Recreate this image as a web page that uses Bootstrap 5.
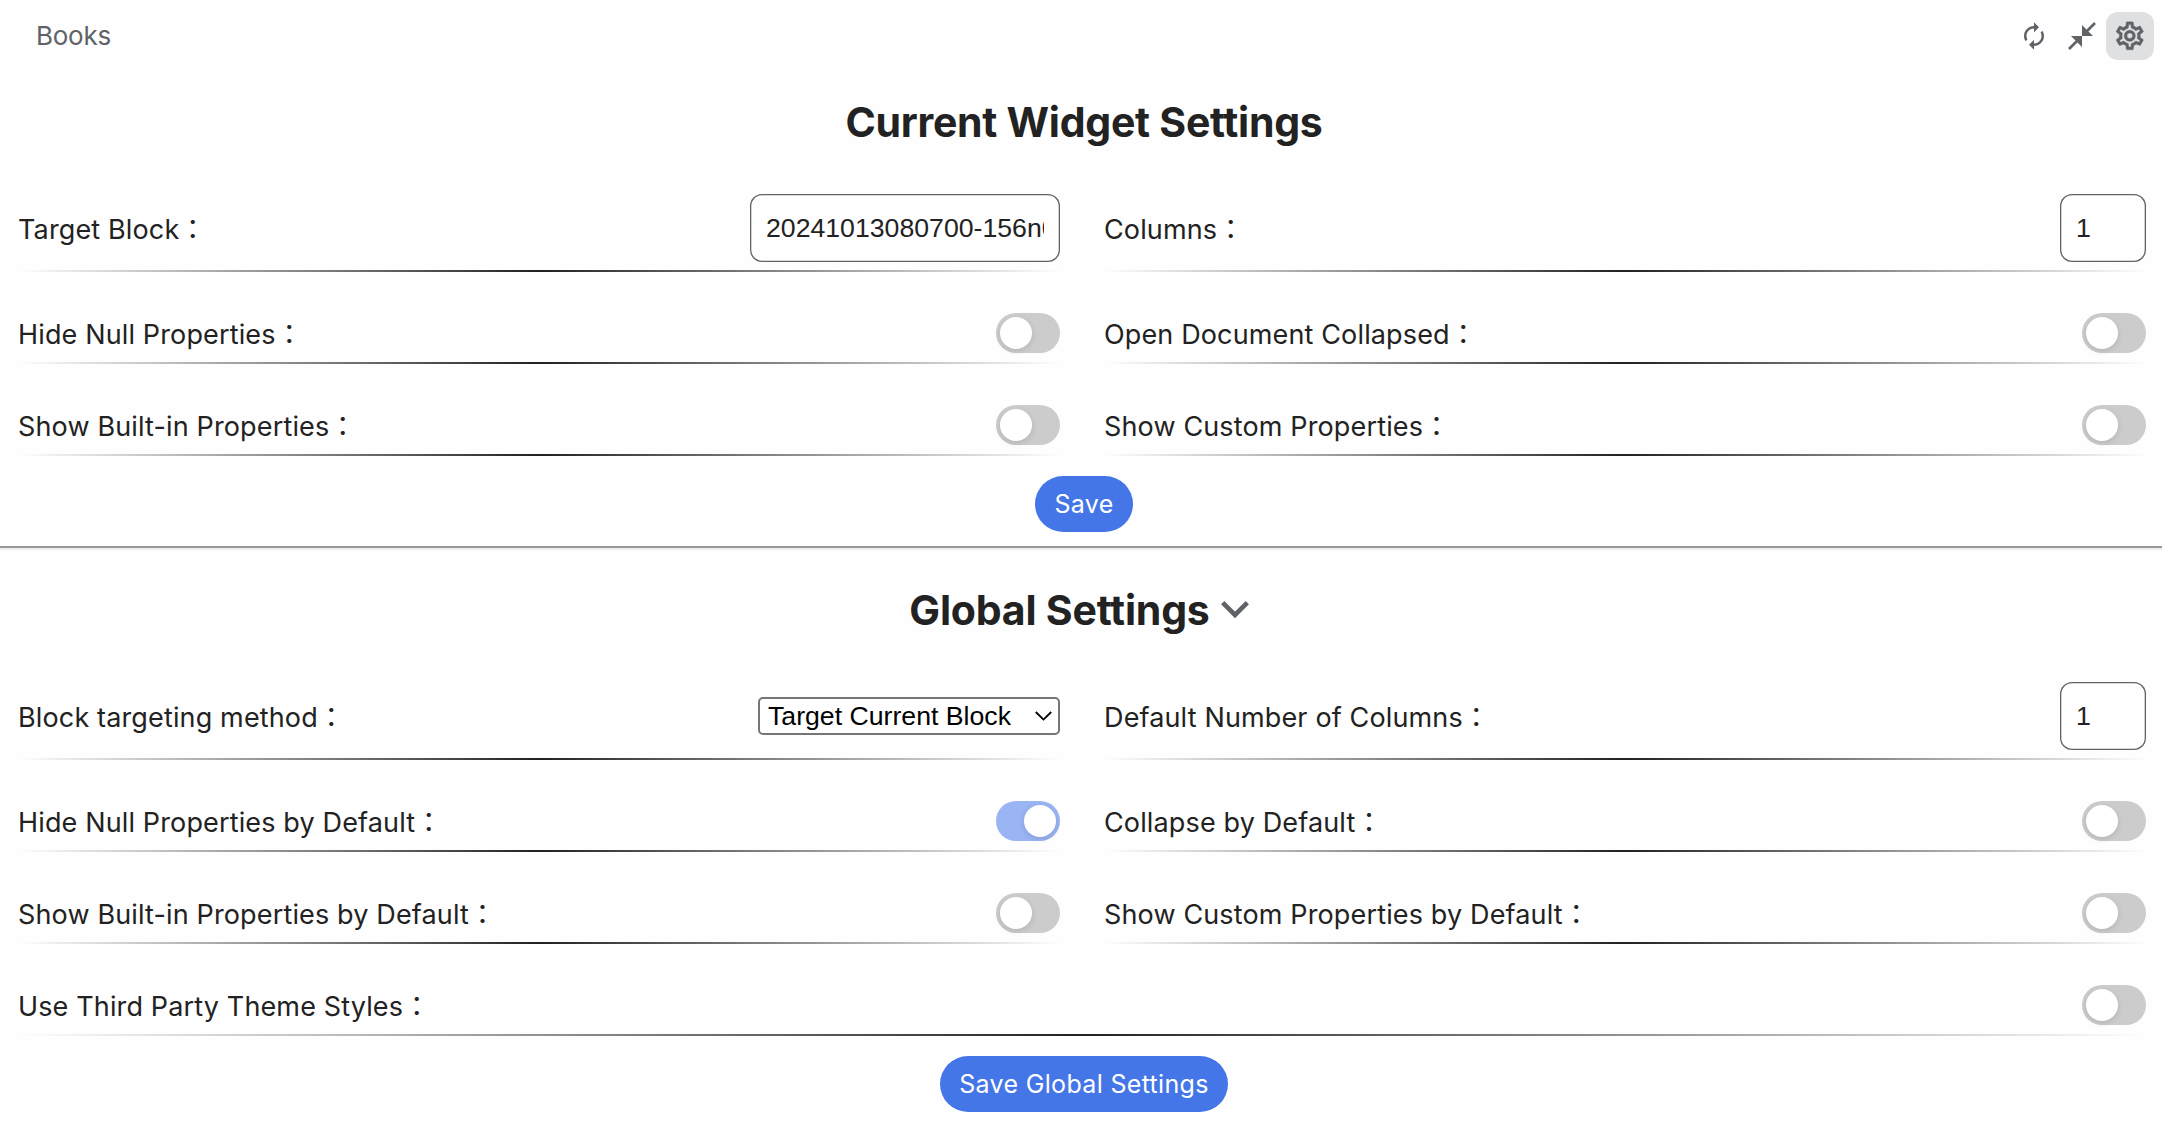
<!DOCTYPE html>
<html lang="en" data-bs-theme="light">
<head>
<meta charset="utf-8">
<meta name="viewport" content="width=device-width, initial-scale=1">
<title>Books</title>
<link href="https://cdn.jsdelivr.net/npm/bootstrap@5.3.0/dist/css/bootstrap.min.css" rel="stylesheet">
<style>
  body { background: #fefefe; color: #222; font-family: Inter, "Noto Sans CJK JP", sans-serif; font-size: 27px; line-height: 40px; overflow: hidden; }
  .widget-bar { height: 62px; padding: 12px 8px 0 36px; color: #5f6368; }
  .widget-name { font-size: 26px; letter-spacing: -.25px; line-height: 47px; }
  .tool { width: 48px; height: 48px; padding: 0; border: 0; border-radius: 12px; background: transparent; color: #5f6368; }
  .tool-on { background: #dfe0e1; }
  .panel { padding: 0 16px 0 18px; }
  .panel-title { height: 118px; padding: 35px 0 0 4px; margin: 0; font-size: 41px; font-weight: 700; line-height: 50px; letter-spacing: -.26px; color: #222; }
  .title-text { letter-spacing: -.2px; }
  .chevron { margin: 0 10px 0 11px; color: #5f6368; }
  .fields { display: grid; grid-template-columns: 1fr 1fr; column-gap: 44px; }
  .field { height: 92px; padding: 41px 0 11px; background: linear-gradient(to right, transparent, #202124, transparent) bottom / 100% 2px no-repeat; }
  .field-tall { padding: 14px 0 10px; }
  .field-wide { grid-column: 1 / -1; }
  .field label { letter-spacing: .14px; padding-top: 4px; white-space: nowrap; }
  .text-box { height: 68px; padding: 0 16px; border: 0; border-radius: 12px; box-shadow: inset 0 0 0 1.3px #5f6368; background: transparent; color: #222; font: 26.67px "Liberation Sans", sans-serif; outline: 0; }
  .w-id { width: 310px; }
  .w-num { width: 86px; }
  .pick { width: 302px; height: 38px; border: 2px solid #767676; border-radius: 5px; background: #fff; padding-right: 6px; }
  .pick select { appearance: none; border: 0; background: transparent; color: #000; font: 26.67px/34px "Liberation Sans", sans-serif; height: 34px; padding: 0 0 0 8px; outline: 0; }
  .switch.form-check-input { width: 64px; height: 40px; margin: 0; border: 0; border-radius: 20px; background: #ccc; padding: 4px; display: flex; }
  .switch.form-check-input::before { content: ""; width: 32px; height: 32px; border-radius: 50%; background: #fff; box-shadow: 0 2px 6px rgba(0,0,0,.12); }
  .switch.form-check-input:checked { background: #9ab4f4; justify-content: flex-end; }
  .save { height: 56px; margin: 20px 0 14px 4px; padding: 1px 19.5px 0; border: 0; border-radius: 28px; background: #4476e8; color: #fff; font-size: 25px; line-height: 55px; letter-spacing: .33px; }
  .rule { height: 4px; background: #eee; border-top: 2px solid #999; }
</style>
<script src="https://cdn.jsdelivr.net/npm/bootstrap@5.3.0/dist/js/bootstrap.bundle.min.js"></script>
</head>
<body>
<header class="widget-bar d-flex justify-content-between align-items-start">
  <span class="widget-name">Books</span>
  <div class="d-flex">
    <button class="tool d-flex align-items-center justify-content-center" aria-label="Refresh">
      <svg width="30" height="30" viewBox="0 0 24 24" fill="currentColor"><path d="M12 6v3l4-4-4-4v3c-4.42 0-8 3.58-8 8 0 1.57.46 3.03 1.24 4.26L6.7 14.8c-.45-.83-.7-1.79-.7-2.8 0-3.31 2.69-6 6-6zm6.76 1.74L17.3 9.2c.44.84.7 1.79.7 2.8 0 3.31-2.69 6-6 6v-3l-4 4 4 4v-3c4.42 0 8-3.58 8-8 0-1.57-.46-3.03-1.24-4.26z"/></svg>
    </button>
    <button class="tool d-flex align-items-center justify-content-center" aria-label="Collapse">
      <svg width="28" height="28" viewBox="0 0 28 28" fill="currentColor" stroke="currentColor"><path stroke="none" d="M14 3v11h11zM3 14h11v11z"/><path stroke-width="2.7" d="M18 10l9-9M10 18l-9 9"/></svg>
    </button>
    <button class="tool tool-on d-flex align-items-center justify-content-center" aria-label="Settings">
      <svg width="33.6" height="33.6" viewBox="0 0 24 24" fill="currentColor" stroke="currentColor" stroke-width=".25"><path d="M19.43 12.98c.04-.32.07-.64.07-.98 0-.34-.03-.66-.07-.98l2.11-1.65c.19-.15.24-.42.12-.64l-2-3.46c-.09-.16-.26-.25-.44-.25-.06 0-.12.01-.17.03l-2.49 1c-.52-.4-1.08-.73-1.69-.98l-.38-2.65C14.46 2.18 14.25 2 14 2h-4c-.25 0-.46.18-.49.42l-.38 2.65c-.61.25-1.17.59-1.69.98l-2.49-1c-.06-.02-.12-.03-.18-.03-.17 0-.34.09-.43.25l-2 3.46c-.13.22-.07.49.12.64l2.11 1.65c-.04.32-.07.65-.07.98 0 .33.03.66.07.98l-2.11 1.65c-.19.15-.24.42-.12.64l2 3.46c.09.16.26.25.44.25.06 0 .12-.01.17-.03l2.49-1c.52.4 1.08.73 1.69.98l.38 2.65c.03.24.24.42.49.42h4c.25 0 .46-.18.49-.42l.38-2.65c.61-.25 1.17-.59 1.69-.98l2.49 1c.06.02.12.03.18.03.17 0 .34-.09.43-.25l2-3.46c.12-.22.07-.49-.12-.64l-2.11-1.65zm-1.98-1.71c.04.31.05.52.05.73 0 .21-.02.43-.05.73l-.14 1.13.89.7 1.08.84-.7 1.21-1.27-.51-1.04-.42-.9.68c-.43.32-.84.56-1.25.73l-1.06.43-.16 1.13-.2 1.35h-1.4l-.19-1.35-.16-1.13-1.06-.43c-.43-.18-.83-.41-1.23-.71l-.91-.7-1.06.43-1.27.51-.7-1.21 1.08-.84.89-.7-.14-1.13c-.03-.31-.05-.54-.05-.74s.02-.43.05-.73l.14-1.13-.89-.7-1.08-.84.7-1.21 1.27.51 1.04.42.9-.68c.43-.32.84-.56 1.25-.73l1.06-.43.16-1.13.2-1.35h1.39l.19 1.35.16 1.13 1.06.43c.43.18.83.41 1.23.71l.91.7 1.06-.43 1.27-.51.7 1.21-1.07.85-.89.7.14 1.13zM12 8c-2.210 0-4 1.79-4 4s1.79 4 4 4 4-1.79 4-4-1.79-4-4-4zm0 6c-1.100 0-2-.9-2-2s.9-2 2-2 2 .9 2 2-.9 2-2 2z"/></svg>
    </button>
  </div>
</header>

<section class="panel">
  <h2 class="panel-title text-center">Current Widget Settings</h2>
  <div class="fields">
    <div class="field field-tall d-flex align-items-center justify-content-between"><label for="target">Target Block：</label><input id="target" class="text-box w-id" type="text" value="20241013080700-156n0"></div>
    <div class="field field-tall d-flex align-items-center justify-content-between"><label for="cols">Columns：</label><input id="cols" class="text-box w-num" type="text" value="1"></div>
    <div class="field d-flex align-items-center justify-content-between"><label for="s1">Hide Null Properties：</label><input id="s1" class="form-check-input switch" type="checkbox"></div>
    <div class="field d-flex align-items-center justify-content-between"><label for="s2">Open Document Collapsed：</label><input id="s2" class="form-check-input switch" type="checkbox"></div>
    <div class="field d-flex align-items-center justify-content-between"><label for="s3">Show Built-in Properties：</label><input id="s3" class="form-check-input switch" type="checkbox"></div>
    <div class="field d-flex align-items-center justify-content-between"><label for="s4">Show Custom Properties：</label><input id="s4" class="form-check-input switch" type="checkbox"></div>
  </div>
  <div class="d-flex justify-content-center"><button class="save">Save</button></div>
</section>

<div class="rule"></div>

<section class="panel">
  <h2 class="panel-title d-flex justify-content-center"><span class="title-text">Global Settings</span><svg class="chevron" width="28" height="50" viewBox="0 0 28 50" fill="none" stroke="currentColor" stroke-width="4.6"><path d="M1.7 17.7L14 30L26.3 17.7"/></svg></h2>
  <div class="fields">
    <div class="field field-tall d-flex align-items-center justify-content-between"><label for="method">Block targeting method：</label>
      <div class="pick d-flex align-items-center justify-content-between"><select id="method"><option>Target Current Block</option></select><svg width="17" height="10" viewBox="0 0 17 10" fill="none" stroke="#000" stroke-width="1.8"><path d="M.8 1l7.7 7.6L16.200 1"/></svg></div></div>
    <div class="field field-tall d-flex align-items-center justify-content-between"><label for="gcols">Default Number of Columns：</label><input id="gcols" class="text-box w-num" type="text" value="1"></div>
    <div class="field d-flex align-items-center justify-content-between"><label for="g1">Hide Null Properties by Default：</label><input id="g1" class="form-check-input switch" type="checkbox" checked></div>
    <div class="field d-flex align-items-center justify-content-between"><label for="g2">Collapse by Default：</label><input id="g2" class="form-check-input switch" type="checkbox"></div>
    <div class="field d-flex align-items-center justify-content-between"><label for="g3">Show Built-in Properties by Default：</label><input id="g3" class="form-check-input switch" type="checkbox"></div>
    <div class="field d-flex align-items-center justify-content-between"><label for="g4">Show Custom Properties by Default：</label><input id="g4" class="form-check-input switch" type="checkbox"></div>
    <div class="field field-wide d-flex align-items-center justify-content-between"><label for="g5">Use Third Party Theme Styles：</label><input id="g5" class="form-check-input switch" type="checkbox"></div>
  </div>
  <div class="d-flex justify-content-center"><button class="save">Save Global Settings</button></div>
</section>
</body>
</html>
